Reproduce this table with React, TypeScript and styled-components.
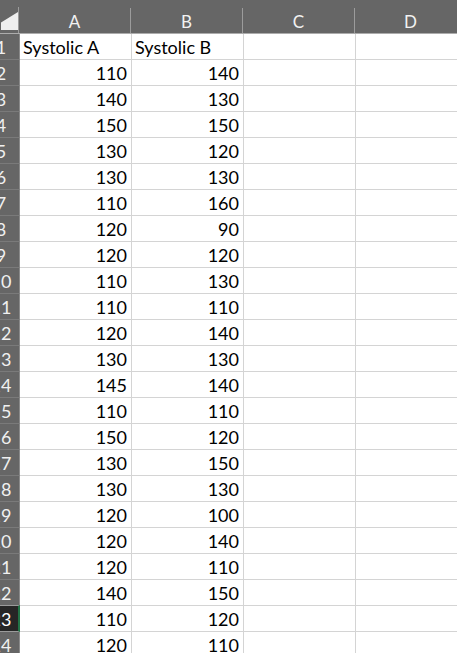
import React from "react";
import styled, { createGlobalStyle } from "styled-components";

const GlobalStyle = createGlobalStyle`
  html, body {
    margin: 0;
    padding: 0;
    background: #ffffff;
    overflow: hidden;
  }
  body {
    font-family: Lato, "Open Sans", Arial, sans-serif;
  }
`;

const Sheet = styled.div`
  width: 457px;
  height: 653px;
  overflow: hidden;
  display: flex;
  flex-direction: column;
  background: #ffffff;
`;

const HeaderRow = styled.div`
  display: flex;
  flex-shrink: 0;
  height: 33px;
  background: #666666;
  border-bottom: 1px solid #acacac;
`;

const Corner = styled.div`
  width: 19px;
  flex-shrink: 0;
  display: flex;
  align-items: flex-end;
  justify-content: flex-end;
  padding-bottom: 3px;
  box-sizing: border-box;
  border-right: 1px solid #9c9c9c;
  border-image: linear-gradient(to bottom, transparent 8px, #9c9c9c 8px) 1;
`;

const ColHeader = styled.div`
  box-sizing: border-box;
  margin-top: 8px;
  height: 25px;
  width: 112px;
  flex-shrink: 0;
  border-right: 1px solid #9c9c9c;
  color: #f2f2f2;
  font-size: 17px;
  display: flex;
  align-items: center;
  justify-content: center;
  padding-top: 1px;
`;

const Row = styled.div`
  display: flex;
  flex-shrink: 0;
  height: 26px;
`;

const RowHeader = styled.div<{ $selected?: boolean }>`
  box-sizing: border-box;
  width: 20px;
  flex-shrink: 0;
  overflow: hidden;
  display: flex;
  align-items: center;
  background: ${(p) => (p.$selected ? "#262626" : "#666666")};
  color: ${(p) => (p.$selected ? "#ffffff" : "#f0f0f0")};
  border-bottom: 1px solid ${(p) => (p.$selected ? "#9a9a9a" : "#7a7a7a")};
  border-right: ${(p) => (p.$selected ? "2px solid #217346" : "1px solid #8a8a8a")};
  ${(p) => (p.$selected ? "border-top: 1px solid #9a9a9a; margin-top: -1px;" : "")}
  font-size: 18px;
`;

const RowNum = styled.span`
  flex-shrink: 0;
  width: 28px;
  margin-left: -13px;
  text-align: center;
`;

const Cell = styled.div<{ $align?: "left" | "right" }>`
  box-sizing: border-box;
  width: 112px;
  flex-shrink: 0;
  border-right: 1px solid #d4d4d4;
  border-bottom: 1px solid #d4d4d4;
  padding: 0 4px 0 3px;
  display: flex;
  align-items: center;
  justify-content: ${(p) => (p.$align === "right" ? "flex-end" : "flex-start")};
  color: #000000;
  font-size: 18px;
  white-space: nowrap;
`;

const data: [string, string][] = [
  ["110", "140"],
  ["140", "130"],
  ["150", "150"],
  ["130", "120"],
  ["130", "130"],
  ["110", "160"],
  ["120", "90"],
  ["120", "120"],
  ["110", "130"],
  ["110", "110"],
  ["120", "140"],
  ["130", "130"],
  ["145", "140"],
  ["110", "110"],
  ["150", "120"],
  ["130", "150"],
  ["130", "130"],
  ["120", "100"],
  ["120", "140"],
  ["120", "110"],
  ["140", "150"],
  ["110", "120"],
  ["120", "110"],
];

const CornerTriangle = () => (
  <svg width="17" height="18" viewBox="0 0 17 18">
    <polygon points="0,10.5 17,0 17,18 0,18" fill="#efefef" />
  </svg>
);

export default function App() {
  return (
    <Sheet>
      <GlobalStyle />
      <HeaderRow>
        <Corner>
          <CornerTriangle />
        </Corner>
        <ColHeader>A</ColHeader>
        <ColHeader>B</ColHeader>
        <ColHeader>C</ColHeader>
        <ColHeader>D</ColHeader>
      </HeaderRow>
      <Row>
        <RowHeader>
          <RowNum>1</RowNum>
        </RowHeader>
        <Cell>Systolic A</Cell>
        <Cell>Systolic B</Cell>
        <Cell />
        <Cell />
      </Row>
      {data.map(([a, b], i) => {
        const n = i + 2;
        return (
          <Row key={n}>
            <RowHeader $selected={n === 23}>
              <RowNum>{n}</RowNum>
            </RowHeader>
            <Cell $align="right">{a}</Cell>
            <Cell $align="right">{b}</Cell>
            <Cell />
            <Cell />
          </Row>
        );
      })}
    </Sheet>
  );
}
